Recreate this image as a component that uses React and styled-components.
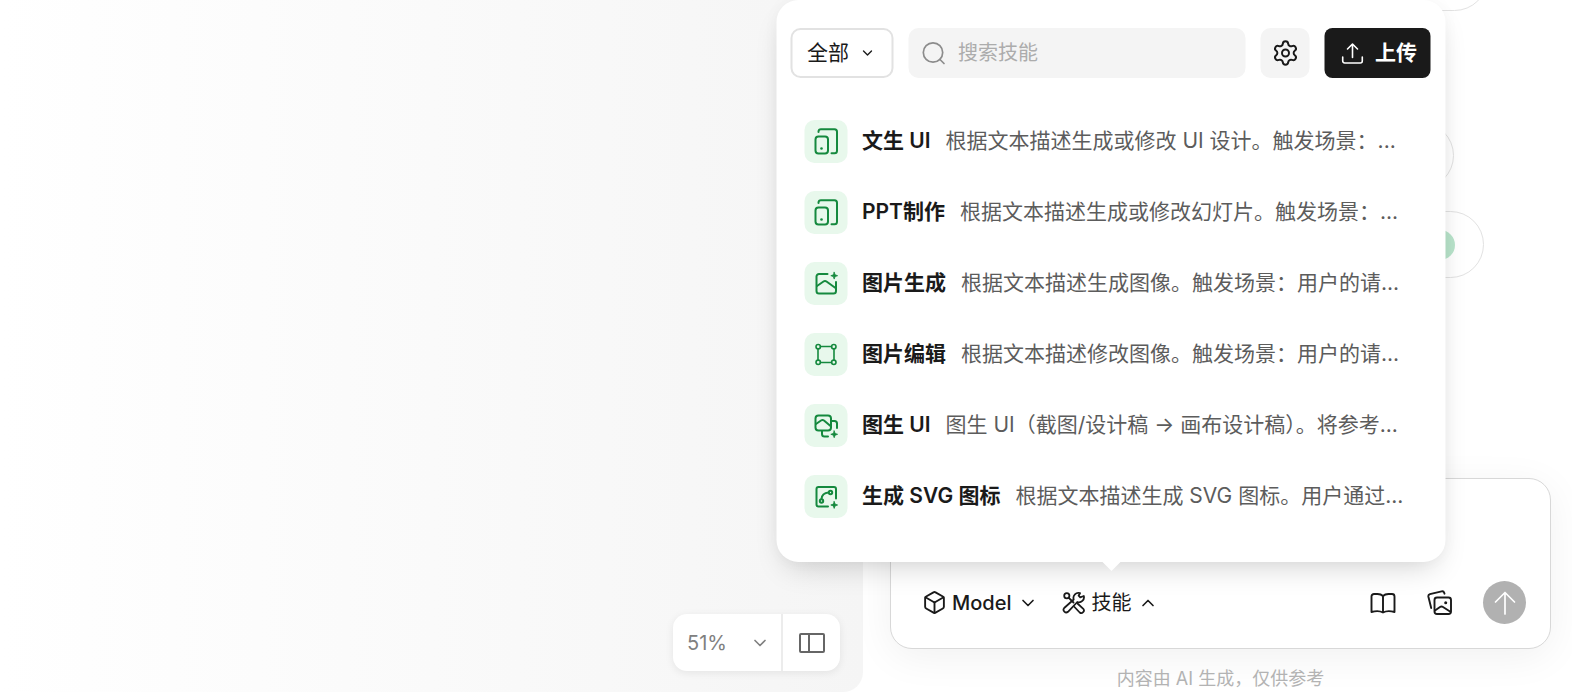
import React, {useState} from 'react'
import styled, {createGlobalStyle} from 'styled-components'
import {Box, ChevronDown, ChevronUp, Settings} from 'lucide-react'

const GlobalStyle = createGlobalStyle`
  * {
    box-sizing: border-box;
  }

  body {
    margin: 0;
    background: #fff;
    color: #1a1a1a;
    font-family: Inter, 'Noto Sans CJK SC', sans-serif;
  }

  button,
  input,
  select,
  textarea {
    font-family: inherit;
    color: inherit;
  }
`

const Page = styled.div`
  display: flex;
  min-height: 100vh;
  overflow: hidden;
`

const Canvas = styled.main`
  flex: 1;
  display: flex;
  align-items: flex-end;
  justify-content: flex-end;
  padding: 21px 23px;
  border-bottom-right-radius: 20px;
  background: linear-gradient(90deg, #fff, #f5f5f5);
`

const ViewControls = styled.div`
  display: flex;
  height: 57px;
  border-radius: 14px;
  background: #fff;
  box-shadow: 0 2px 8px rgba(0, 0, 0, 0.08);
`

const SelectBox = styled.label`
  position: relative;
  display: flex;
  align-items: center;
  color: ${(props) => props.color || '#1a1a1a'};

  svg {
    position: absolute;
    right: ${(props) => props.$chevronRight}px;
    pointer-events: none;
  }
`

const ZoomSelect = styled.select`
  width: 110px;
  height: 100%;
  padding: 0 14px;
  border: none;
  border-right: 2px solid #ececec;
  background: none;
  appearance: none;
  font-size: 20px;
`

const LayoutButton = styled.button`
  display: flex;
  align-items: center;
  justify-content: center;
  width: 57px;
  padding: 0;
  border: none;
  background: none;
  color: #666;
`

const Sidebar = styled.aside`
  flex: 0 0 709px;
  display: flex;
  flex-direction: column;
  height: 100vh;
  padding: 0 21px 0 27px;
`

const Suggestions = styled.div`
  flex: 1;
  display: flex;
  flex-direction: column;
  justify-content: flex-end;
  gap: 22px;
  min-height: 0;
  padding-bottom: 200px;
  overflow: hidden;
`

const Suggestion = styled.div`
  flex: none;
  display: flex;
  align-items: center;
  justify-content: flex-end;
  width: ${(props) => props.$width}px;
  height: 67px;
  padding: 0 28px;
  border: 1px solid #e2e2e2;
  border-radius: 34px;
`

const Dot = styled.span`
  width: 30px;
  height: 30px;
  border-radius: 50%;
  background: #b9e4cb;
`

const Composer = styled.form`
  flex: none;
  padding: 24px 24px 24px 31px;
  border: 1px solid #d8d8d8;
  border-radius: 22px;
  background: #fff;
  box-shadow: 0 8px 40px rgba(0, 0, 0, 0.06);
`

const Prompt = styled.textarea`
  display: block;
  width: 100%;
  height: 78px;
  padding: 0;
  border: none;
  outline: none;
  resize: none;
  background: none;
  font-size: 20px;
`

const ComposerBar = styled.div`
  display: flex;
  align-items: center;
  height: 43px;
`

const BarButton = styled.button`
  display: flex;
  align-items: center;
  gap: 5px;
  padding: 0;
  border: none;
  background: none;
  font-size: 20px;
  font-weight: 500;
  line-height: 28px;
`

const SkillButton = styled(BarButton)`
  font-weight: 400;
`

const ChevronBox = styled.span`
  display: flex;
  justify-content: center;
  width: 24px;
`

const SkillAnchor = styled.div`
  position: relative;
  margin-left: 22px;
`

const BarActions = styled.div`
  display: flex;
  align-items: center;
  gap: 31px;
  margin-left: auto;
`

const SendButton = styled.button`
  display: flex;
  align-items: center;
  justify-content: center;
  width: 43px;
  height: 43px;
  padding: 0;
  border: none;
  border-radius: 50%;
  background: #b1b1b1;
  color: #fff;
`

const Disclaimer = styled.p`
  flex: none;
  margin: 16px 0 0;
  color: #b3b3b3;
  font-size: 18px;
  line-height: 27px;
  text-align: center;
`

const Popover = styled.div`
  position: absolute;
  bottom: calc(100% + 27px);
  left: 50%;
  width: 669px;
  padding: 28px 15px 30px 14px;
  border-radius: 22px;
  background: #fff;
  box-shadow: 0 14px 30px -10px rgba(0, 0, 0, 0.18), 0 0 16px rgba(0, 0, 0, 0.03);
  transform: translateX(-50%);

  &::after {
    content: '';
    position: absolute;
    top: 100%;
    left: 50%;
    border: 9px solid transparent;
    border-top-color: #fff;
    border-bottom: none;
    transform: translateX(-50%);
  }
`

const PopoverHeader = styled.div`
  display: flex;
  gap: 15px;
  height: 50px;
`

const FilterSelect = styled.select`
  width: 103px;
  height: 50px;
  padding: 0 14px;
  border: 2px solid #e2e2e2;
  border-radius: 10px;
  background: #fff;
  appearance: none;
  font-size: 21px;
`

const SearchBox = styled.label`
  flex: 1;
  display: flex;
  align-items: center;
  gap: 12px;
  min-width: 0;
  padding: 0 13px;
  border-radius: 10px;
  background: #f4f4f4;
  color: #8c8c8c;
`

const SearchInput = styled.input`
  flex: 1;
  min-width: 0;
  padding: 0;
  border: none;
  outline: none;
  background: none;
  font-size: 20px;

  &::placeholder {
    color: #acacac;
  }
`

const SettingsButton = styled.button`
  display: flex;
  align-items: center;
  justify-content: center;
  width: 49px;
  padding: 0;
  border: none;
  border-radius: 10px;
  background: #f4f4f4;
`

const UploadButton = styled.button`
  display: flex;
  align-items: center;
  gap: 10px;
  padding: 0 14px 0 16px;
  border: none;
  border-radius: 8px;
  background: #1a1a1a;
  color: #fff;
  font-size: 21px;
  font-weight: 600;
  line-height: 28px;
`

const SkillList = styled.ul`
  margin: 28px 0 0;
  padding: 0 14px;
  list-style: none;
`

const SkillItem = styled.li`
  display: flex;
  align-items: center;
  height: 71px;
  font-size: 21px;
  line-height: 28px;
  white-space: nowrap;
`

const SkillIcon = styled.span`
  flex: none;
  display: flex;
  align-items: center;
  justify-content: center;
  width: 43px;
  height: 43px;
  margin-right: 14px;
  border-radius: 10px;
  background: #e8f8ec;
  color: #15893e;
`

const SkillName = styled.strong`
  margin-right: 15px;
  font-weight: 600;
`

const SkillText = styled.span`
  color: #5c5c5c;
`

const Svg = ({width = 29, height = width, stroke = 2, children}) => (
  <svg
    width={width}
    height={height}
    viewBox={`0 0 ${width} ${height}`}
    fill="none"
    stroke="currentColor"
    strokeWidth={stroke}
    strokeLinecap="round"
    strokeLinejoin="round"
    aria-hidden="true"
  >
    {children}
  </svg>
)

const Sparkle = ({x, y}) => (
  <path
    d={`M${x} ${y - 3.4}l.9 2.5 2.5.9-2.5.9-.9 2.5-.9-2.5-2.5-.9 2.5-.9z`}
    fill="currentColor"
    strokeWidth="0.8"
  />
)

const DevicesIcon = () => (
  <Svg>
    <rect x="4" y="9.5" width="12.5" height="17" rx="3" />
    <path d="M7 5V4.5A2.5 2.5 0 0 1 9.5 2.2H23a2.5 2.5 0 0 1 2.5 2.5v19a2.5 2.5 0 0 1-2.5 2.5h-3" />
    <circle cx="10" cy="21.5" r="1.3" fill="currentColor" stroke="none" />
  </Svg>
)

const ImageSparkleIcon = () => (
  <Svg>
    <path d="M16 5H7.5A2.5 2.5 0 0 0 5 7.5V22a2.5 2.5 0 0 0 2.5 2.5H22a2.5 2.5 0 0 0 2.5-2.5V13" />
    <path d="M5.5 17l6.500-4.500q1.500-1 3 0l9 6.500" />
    <Sparkle x={22.7} y={6.7} />
  </Svg>
)

const FrameIcon = () => (
  <Svg stroke={1.6}>
    <circle cx="6.7" cy="6.7" r="2.2" />
    <circle cx="22.3" cy="6.7" r="2.2" />
    <circle cx="6.7" cy="22.3" r="2.2" />
    <circle cx="22.3" cy="22.3" r="2.2" />
    <path d="M9 6.5h11M9 22.5h11M6.5 9v11M22.5 9v11" />
  </Svg>
)

const ImagesSparkleIcon = () => (
  <Svg>
    <rect x="4" y="4.5" width="15.5" height="15" rx="3" />
    <path d="M4.5 13l5-3.5q1.5-1 3 0l6.5 5.5" />
    <path d="M20 10h3a2.5 2.5 0 0 1 2.5 2.5V17" />
    <path d="M10.5 20v3a2.5 2.5 0 0 0 2.5 2.5h3.5" />
    <Sparkle x={22.7} y={23.3} />
  </Svg>
)

const VectorIcon = () => (
  <Svg>
    <path d="M16.5 24.5H7a2 2 0 0 1-2-2V7a2 2 0 0 1 2-2h15.5a2 2 0 0 1 2 2v9.5" />
    <circle cx="10" cy="19" r="1.7" />
    <circle cx="19" cy="10.5" r="1.7" />
    <path d="M10 17q.5-6 7-6.5" />
    <Sparkle x={22.7} y={23} />
  </Svg>
)

const SearchIcon = () => (
  <Svg width={24} stroke={1.7}>
    <circle cx="11.5" cy="11.5" r="9.7" />
    <path d="M18.5 18.5l4 4" />
  </Svg>
)

const UploadIcon = () => (
  <Svg width={24} stroke={1.6}>
    <path d="M12 16.5V3M7 8l5-5 5 5M2.2 16v4a2 2 0 0 0 2 2h15.6a2 2 0 0 0 2-2v-4" />
  </Svg>
)

const PanelIcon = () => (
  <Svg width={26} height={22} stroke={2}>
    <rect x="1" y="2" width="24" height="18" rx="1" />
    <path d="M10 2v18" />
  </Svg>
)

const ToolsIcon = () => (
  <Svg width={24} stroke={1.8}>
    <circle cx="4.8" cy="4.8" r="2.6" />
    <path d="M6.8 6.8l4.7 4.7M15.5 12.5l5.8 5.3a2.6 2.6 0 0 1-3.6 3.7L12.5 16" />
    <path d="M18.2 6.3l3.6-1.3a5 5 0 0 1-6.5 6L6 20.8a2.7 2.7 0 0 1-3.8-3.8l9.5-8.5a5 5 0 0 1 6.3-6.3L16.6 4.7z" />
  </Svg>
)

const BookIcon = () => (
  <Svg width={26} height={24} stroke={1.9}>
    <path d="M13 5Q11 3 7.5 3H4a2.5 2.5 0 0 0-2.5 2.5V21q7-2 11.5.5Q17.5 19 24.5 21V5.5A2.5 2.5 0 0 0 22 3h-3.5Q15 3 13 5zv16" />
  </Svg>
)

const GalleryIcon = () => (
  <Svg width={25} stroke={1.9}>
    <rect x="7.5" y="7.5" width="16.5" height="16.5" rx="2.5" />
    <path d="M8 20.5l5-3.5q1.5-1 3 0l7 4.5" />
    <circle cx="18.7" cy="12.7" r="1.5" fill="currentColor" stroke="none" />
    <path d="M4.2 18L1.4 6.8q-.4-2 1.5-2.6L14.6 1.3q2-.5 2.6 1.4l.3 1" />
  </Svg>
)

const SendIcon = () => (
  <Svg width={24} stroke={1.7}>
    <path d="M12 23V1.5M2.5 11L12 1.5l9.5 9.5" />
  </Svg>
)

const skills = [
  {name: '文生 UI', text: '根据文本描述生成或修改 UI 设计。触发场景：...', Icon: DevicesIcon},
  {name: 'PPT制作', text: '根据文本描述生成或修改幻灯片。触发场景：...', Icon: DevicesIcon},
  {name: '图片生成', text: '根据文本描述生成图像。触发场景：用户的请...', Icon: ImageSparkleIcon},
  {name: '图片编辑', text: '根据文本描述修改图像。触发场景：用户的请...', Icon: FrameIcon},
  {name: '图生 UI', text: '图生 UI（截图/设计稿 → 画布设计稿）。将参考...', Icon: ImagesSparkleIcon},
  {name: '生成 SVG 图标', text: '根据文本描述生成 SVG 图标。用户通过...', Icon: VectorIcon}
]

const SkillPopover = () => (
  <Popover role="dialog" aria-label="技能">
    <PopoverHeader>
      <SelectBox $chevronRight={18}>
        <FilterSelect aria-label="分类">
          <option>全部</option>
        </FilterSelect>
        <ChevronDown size={16} />
      </SelectBox>
      <SearchBox>
        <SearchIcon />
        <SearchInput type="text" placeholder="搜索技能" aria-label="搜索技能" />
      </SearchBox>
      <SettingsButton type="button" aria-label="设置">
        <Settings size={28} strokeWidth={1.7} />
      </SettingsButton>
      <UploadButton type="button">
        <UploadIcon />
        上传
      </UploadButton>
    </PopoverHeader>
    <SkillList>
      {skills.map(({name, text, Icon}) => (
        <SkillItem key={name}>
          <SkillIcon>
            <Icon />
          </SkillIcon>
          <SkillName>{name}</SkillName>
          <SkillText>{text}</SkillText>
        </SkillItem>
      ))}
    </SkillList>
  </Popover>
)

const App = () => {
  const [open, setOpen] = useState(true)

  return (
    <Page>
      <GlobalStyle />
      <Canvas>
        <ViewControls>
          <SelectBox color="#808080" $chevronRight={13}>
            <ZoomSelect aria-label="缩放">
              <option>51%</option>
            </ZoomSelect>
            <ChevronDown size={20} />
          </SelectBox>
          <LayoutButton type="button" aria-label="布局">
            <PanelIcon />
          </LayoutButton>
        </ViewControls>
      </Canvas>
      <Sidebar>
        <Suggestions>
          <Suggestion $width={598} />
          <Suggestion $width={510} />
          <Suggestion $width={564} />
          <Suggestion $width={594}>
            <Dot />
          </Suggestion>
        </Suggestions>
        <Composer onSubmit={(e) => e.preventDefault()}>
          <Prompt aria-label="输入" />
          <ComposerBar>
            <BarButton type="button">
              <Box size={25} strokeWidth={1.8} />
              Model
              <ChevronBox>
                <ChevronDown size={20} />
              </ChevronBox>
            </BarButton>
            <SkillAnchor>
              <SkillButton type="button" aria-expanded={open} onClick={() => setOpen(!open)}>
                <ToolsIcon />
                技能
                <ChevronBox>{open ? <ChevronUp size={20} /> : <ChevronDown size={20} />}</ChevronBox>
              </SkillButton>
              {open && <SkillPopover />}
            </SkillAnchor>
            <BarActions>
              <BarButton type="button" aria-label="知识库">
                <BookIcon />
              </BarButton>
              <BarButton type="button" aria-label="图片">
                <GalleryIcon />
              </BarButton>
              <SendButton type="submit" aria-label="发送">
                <SendIcon />
              </SendButton>
            </BarActions>
          </ComposerBar>
        </Composer>
        <Disclaimer>内容由 AI 生成，仅供参考</Disclaimer>
      </Sidebar>
    </Page>
  )
}

export default App
